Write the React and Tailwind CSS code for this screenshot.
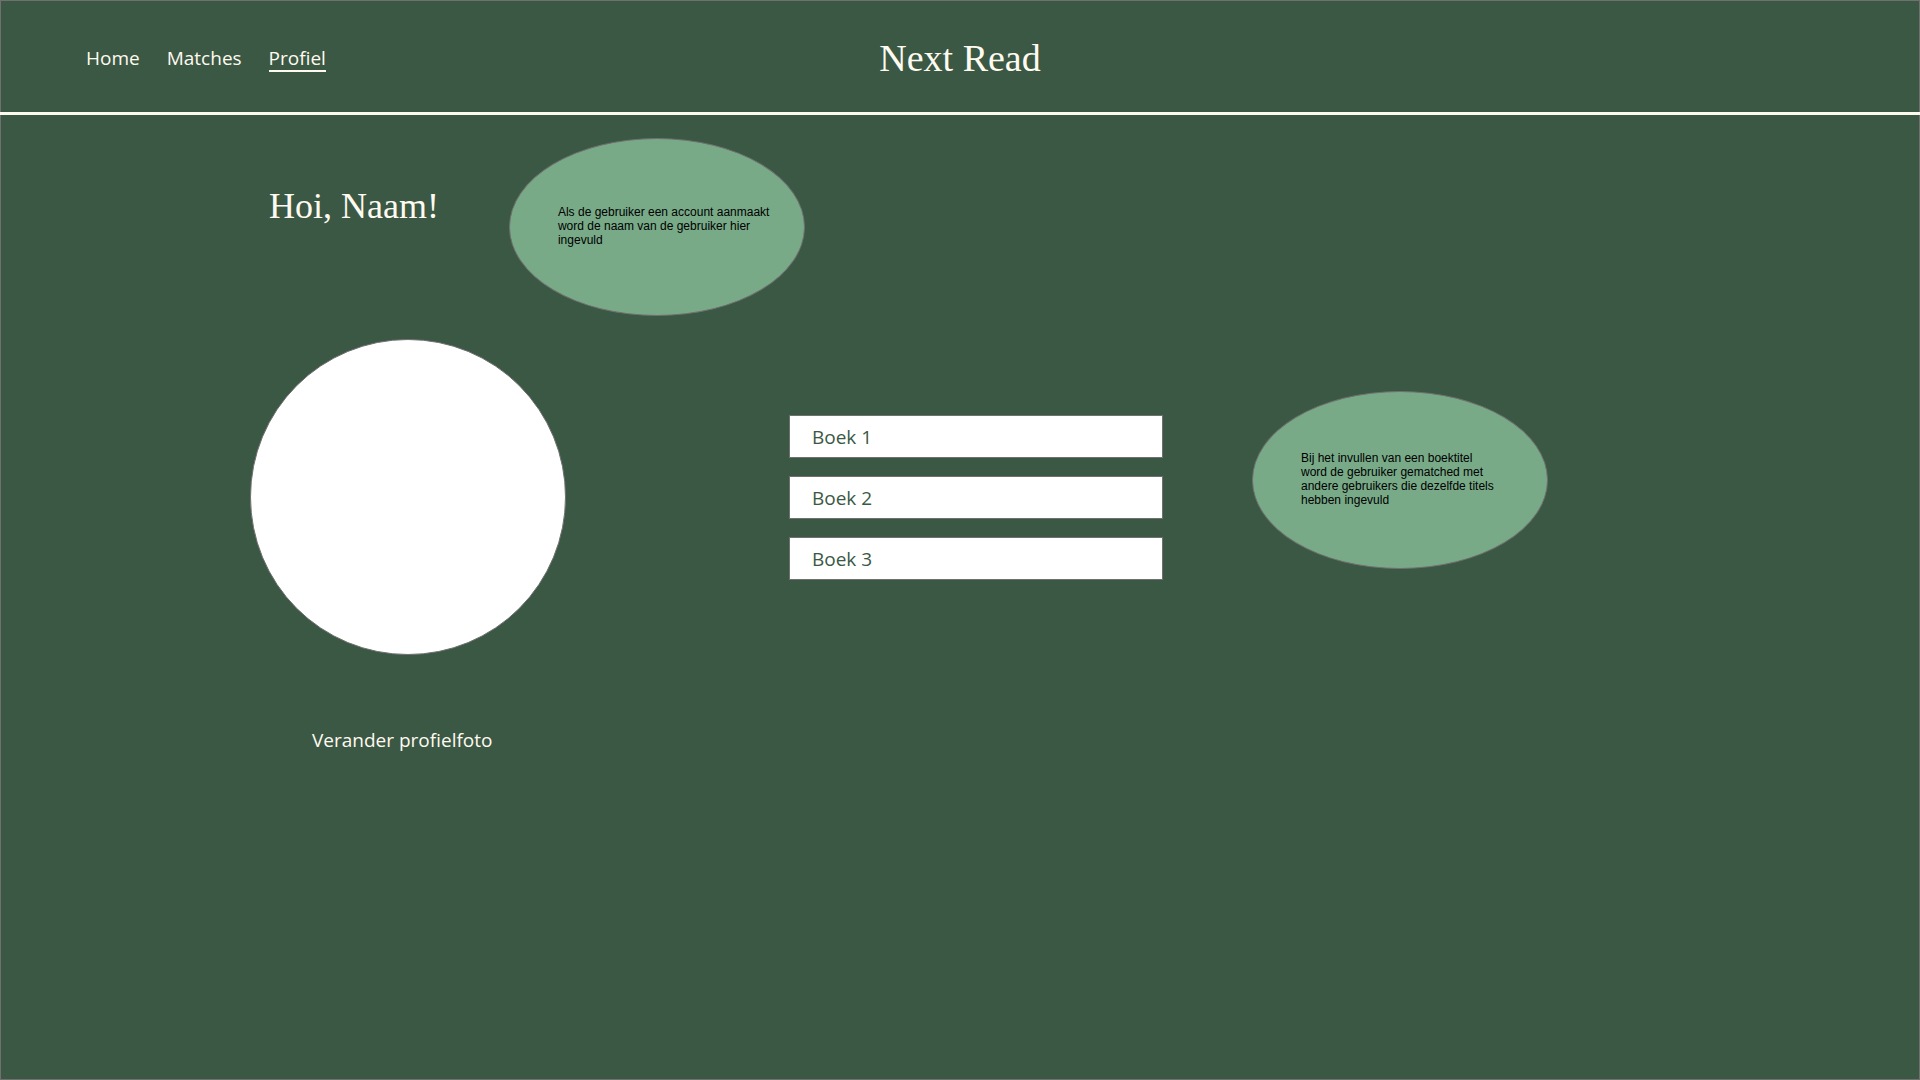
const navItems = [
  { label: "Home", active: false },
  { label: "Matches", active: false },
  { label: "Profiel", active: true },
];

const books = ["Boek 1", "Boek 2", "Boek 3"];

function Note({ children }) {
  return (
    <aside className="flex h-[178px] w-[296px] shrink-0 items-center rounded-[50%] border border-[#707070] bg-[#78aa88] pr-6 pb-0.5 pl-12 font-['Liberation_Sans',Arial,sans-serif] text-[12px] leading-[14px] font-normal text-black">
      <p>{children}</p>
    </aside>
  );
}

export default function App() {
  return (
    <div className="flex min-h-screen flex-col bg-[#3b5844] font-['Open_Sans',sans-serif] text-[19px] leading-7 text-[#fffaf0]">
      <header className="grid h-28 grid-cols-[1fr_auto_1fr] items-center border-x border-t border-[#707070]">
        <nav className="flex items-center gap-[27px] pt-[5px] pl-[85px]" aria-label="Hoofdmenu">
          {navItems.map((item) => (
            <a
              key={item.label}
              href="#"
              aria-current={item.active ? "page" : undefined}
              className={
                item.active
                  ? "border-b-2 border-[#fffaf0] leading-6"
                  : "border-b-2 border-transparent leading-6"
              }
            >
              {item.label}
            </a>
          ))}
        </nav>
        <div className="pt-0.5 font-['Liberation_Serif',serif] text-[38px] leading-10">
          Next Read
        </div>
      </header>
      <div className="h-[3px] bg-[#fffaf0]" />

      <main className="flex-1 border-x border-b border-[#707070] pt-[23px]">
        <div className="flex items-start gap-[70px] pl-[268px]">
          <h1 className="mt-12 font-['Liberation_Serif',serif] text-[36px] leading-10 font-normal whitespace-nowrap">
            Hoi, Naam!
          </h1>
          <Note>
            Als de gebruiker een account aanmaakt word de naam van de gebruiker hier ingevuld
          </Note>
        </div>

        <div className="mt-[23px] grid grid-cols-[249fr_539fr_463fr_667fr] items-start">
          <section className="col-start-2" aria-label="Profielfoto">
            <div
              role="img"
              aria-label="Profielfoto"
              className="size-[316px] rounded-full border border-[#707070] bg-white"
            />
            <button type="button" className="mt-[71px] ml-[62px] cursor-pointer whitespace-nowrap">
              Verander profielfoto
            </button>
          </section>

          <form className="mt-[76px] flex w-full max-w-[374px] flex-col gap-[18px]">
            {books.map((book) => (
              <input
                key={book}
                type="text"
                aria-label={book}
                defaultValue={book}
                className="h-[43px] w-full border border-[#707070] bg-white pl-[22px] text-[#3b5844]"
              />
            ))}
          </form>

          <div className="mt-[52px]">
            <Note>
              Bij het invullen van een boektitel
              <br />
              word de gebruiker gematched met andere gebruikers die dezelfde titels hebben ingevuld
            </Note>
          </div>
        </div>
      </main>
    </div>
  );
}
